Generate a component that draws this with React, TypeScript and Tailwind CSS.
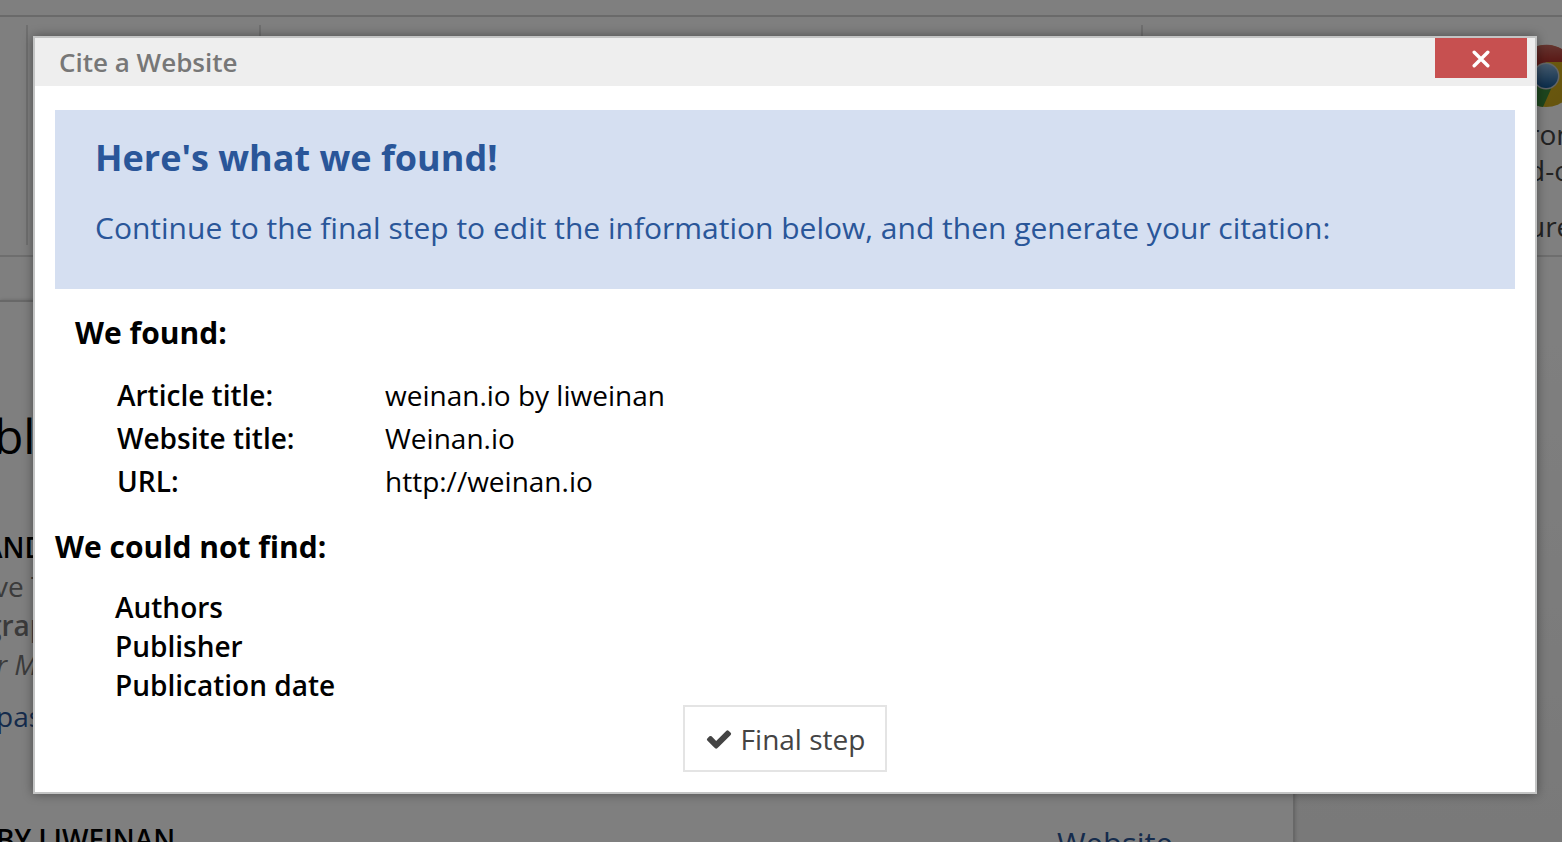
import React from "react";

const found = [
  { label: "Article title:", value: "weinan.io by liweinan" },
  { label: "Website title:", value: "Weinan.io" },
  { label: "URL:", value: "http://weinan.io" },
];

const missing = ["Authors", "Publisher", "Publication date"];

function ChromeLogo() {
  return (
    <svg viewBox="0 0 64 64" className="size-16" aria-hidden="true">
      <defs>
        <linearGradient id="red" x1="0" y1="0" x2="0" y2="1">
          <stop offset="0" stopColor="#c96a60" />
          <stop offset="0.4" stopColor="#b83a34" />
          <stop offset="1" stopColor="#8f1f1c" />
        </linearGradient>
        <linearGradient id="blue" x1="0" y1="0" x2="0" y2="1">
          <stop offset="0" stopColor="#8ab4da" />
          <stop offset="1" stopColor="#145896" />
        </linearGradient>
        <linearGradient id="yellow" x1="0" y1="0" x2="1" y2="1">
          <stop offset="0" stopColor="#e0b81c" />
          <stop offset="1" stopColor="#c9a71c" />
        </linearGradient>
      </defs>
      <circle cx="32" cy="32" r="31" fill="url(#yellow)" />
      <path d="M32 32 5.2 16.5A31 31 0 0 0 29 62.9L41 36Z" fill="#3b8a3c" />
      <path d="M5.2 16.5A31 31 0 0 1 60 18H32L19 37Z" fill="url(#red)" />
      <circle cx="32" cy="32" r="13.5" fill="#c4c9ce" />
      <circle cx="32" cy="32" r="12" fill="url(#blue)" />
    </svg>
  );
}

function Page() {
  return (
    <div aria-hidden="true" className="flex h-screen flex-col overflow-hidden bg-white whitespace-nowrap">
      <div className="h-[17px] shrink-0 border-b-2 border-[#d4d4d4]" />
      <div className="flex h-60 shrink-0 border-b-2 border-[#dcdcdc] pt-2 pb-2.5">
        <div className="w-7 border-r-2 border-[#dedede]" />
        <div className="w-[233px] border-r-2 border-[#dedede]" />
        <div className="grow border-r-2 border-[#dedede]" />
        <div className="flex w-[419px] justify-end">
          <div className="w-12 pt-[19px] text-[28px] leading-9 text-[#444]">
            <ChromeLogo />
            <div className="pt-2 pl-3.5">
              <p>rom</p>
              <p>d-o</p>
              <p className="mt-5">ure</p>
            </div>
          </div>
        </div>
      </div>
      <div className="mt-[43px] flex grow bg-linear-to-b from-white to-[#f2f2f2]">
        <div className="flex w-[1295px] flex-col border-t-2 border-r-2 border-[#d0d0d0] bg-white shadow-[0_0_4px_rgba(0,0,0,0.2)]">
          <h2 className="-ml-1.5 mt-[98px] text-[48px] leading-[72px] text-black">bl</h2>
          <p className="-ml-4 mt-[55px] text-[28px] font-semibold leading-10 text-black">AND</p>
          <p className="-ml-1.5 text-[28px] leading-[39px] text-[#777]">ve T</p>
          <p className="-ml-3.5 text-[28px] font-semibold leading-[39px] text-[#777]">grap</p>
          <p className="-ml-1 text-[28px] italic leading-[39px] text-[#777]">r M</p>
          <p className="-ml-1 mt-3 text-[28px] leading-10 text-[#2a5699]">pas</p>
          <div className="mt-[83px] flex justify-between pr-[120px]">
            <p className="-ml-1 text-[28px] font-semibold leading-10 text-black">BY LIWEINAN</p>
            <p className="text-[31px] leading-[48px] text-[#2a5699]">Website</p>
          </div>
        </div>
      </div>
    </div>
  );
}

export default function App() {
  return (
    <div className="relative h-screen overflow-hidden font-['Open_Sans',sans-serif]">
      <Page />
      <div className="absolute inset-0 bg-black/50 pt-9 pr-[25px] pl-[33px]">
        <section
          role="dialog"
          aria-labelledby="dialog-title"
          className="border-2 border-[#c3c4c4] bg-white text-black shadow-[0_0_10px_rgba(0,0,0,0.4)]"
        >
          <header className="flex h-12 items-start justify-between bg-[#eeeeee] pr-2 pl-6">
            <h1 id="dialog-title" className="text-[26px] font-semibold leading-[48px] text-[#777]">
              Cite a Website
            </h1>
            <button type="button" aria-label="Close" className="flex h-10 w-[92px] items-center justify-center bg-[#c75050]">
              <svg viewBox="0 0 18 18" className="mt-0.5 size-[18px]" aria-hidden="true">
                <path d="M2.2 2.2 15.8 15.8M15.8 2.2 2.2 15.8" stroke="white" strokeWidth="3.4" strokeLinecap="round" fill="none" />
              </svg>
            </button>
          </header>
          <div className="px-5 pt-6 pb-5">
            <div className="bg-[#d5dff1] px-10 pt-5 pb-[37px] text-[#2a5699]">
              <h2 className="text-[36px] font-bold leading-[56px]">Here's what we found!</h2>
              <p className="mt-[18px] text-[30px] leading-[48px]">
                Continue to the final step to edit the information below, and then generate your citation:
              </p>
            </div>
            <h3 className="mt-5 pl-5 text-[30px] font-bold leading-[48px]">We found:</h3>
            <table className="mt-[17px] ml-[62px] text-left text-[28px] leading-[43px]">
              <tbody>
                {found.map((row) => (
                  <tr key={row.label}>
                    <th scope="row" className="w-[268px] font-semibold">{row.label}</th>
                    <td>{row.value}</td>
                  </tr>
                ))}
              </tbody>
            </table>
            <h3 className="mt-5 text-[30px] font-bold leading-[48px]">We could not find:</h3>
            <ul className="mt-[17px] pl-[60px] text-[28px] font-semibold leading-[39px]">
              {missing.map((item) => (
                <li key={item}>{item}</li>
              ))}
            </ul>
            <div className="flex justify-center">
              <button type="button" className="flex h-[67px] items-center gap-2 border-2 border-[#e4e4e4] bg-white px-5 text-[28px] leading-10 text-[#444]">
                <svg viewBox="0 0 1792 1792" className="size-7" fill="currentColor" aria-hidden="true">
                  <path d="M1671 566q0 40-28 68l-724 724-136 136q-28 28-68 28t-68-28l-136-136-362-362q-28-28-28-68t28-68l136-136q28-28 68-28t68 28l294 295 656-657q28-28 68-28t68 28l136 136q28 28 28 68z" />
                </svg>
                Final step
              </button>
            </div>
          </div>
        </section>
      </div>
    </div>
  );
}
